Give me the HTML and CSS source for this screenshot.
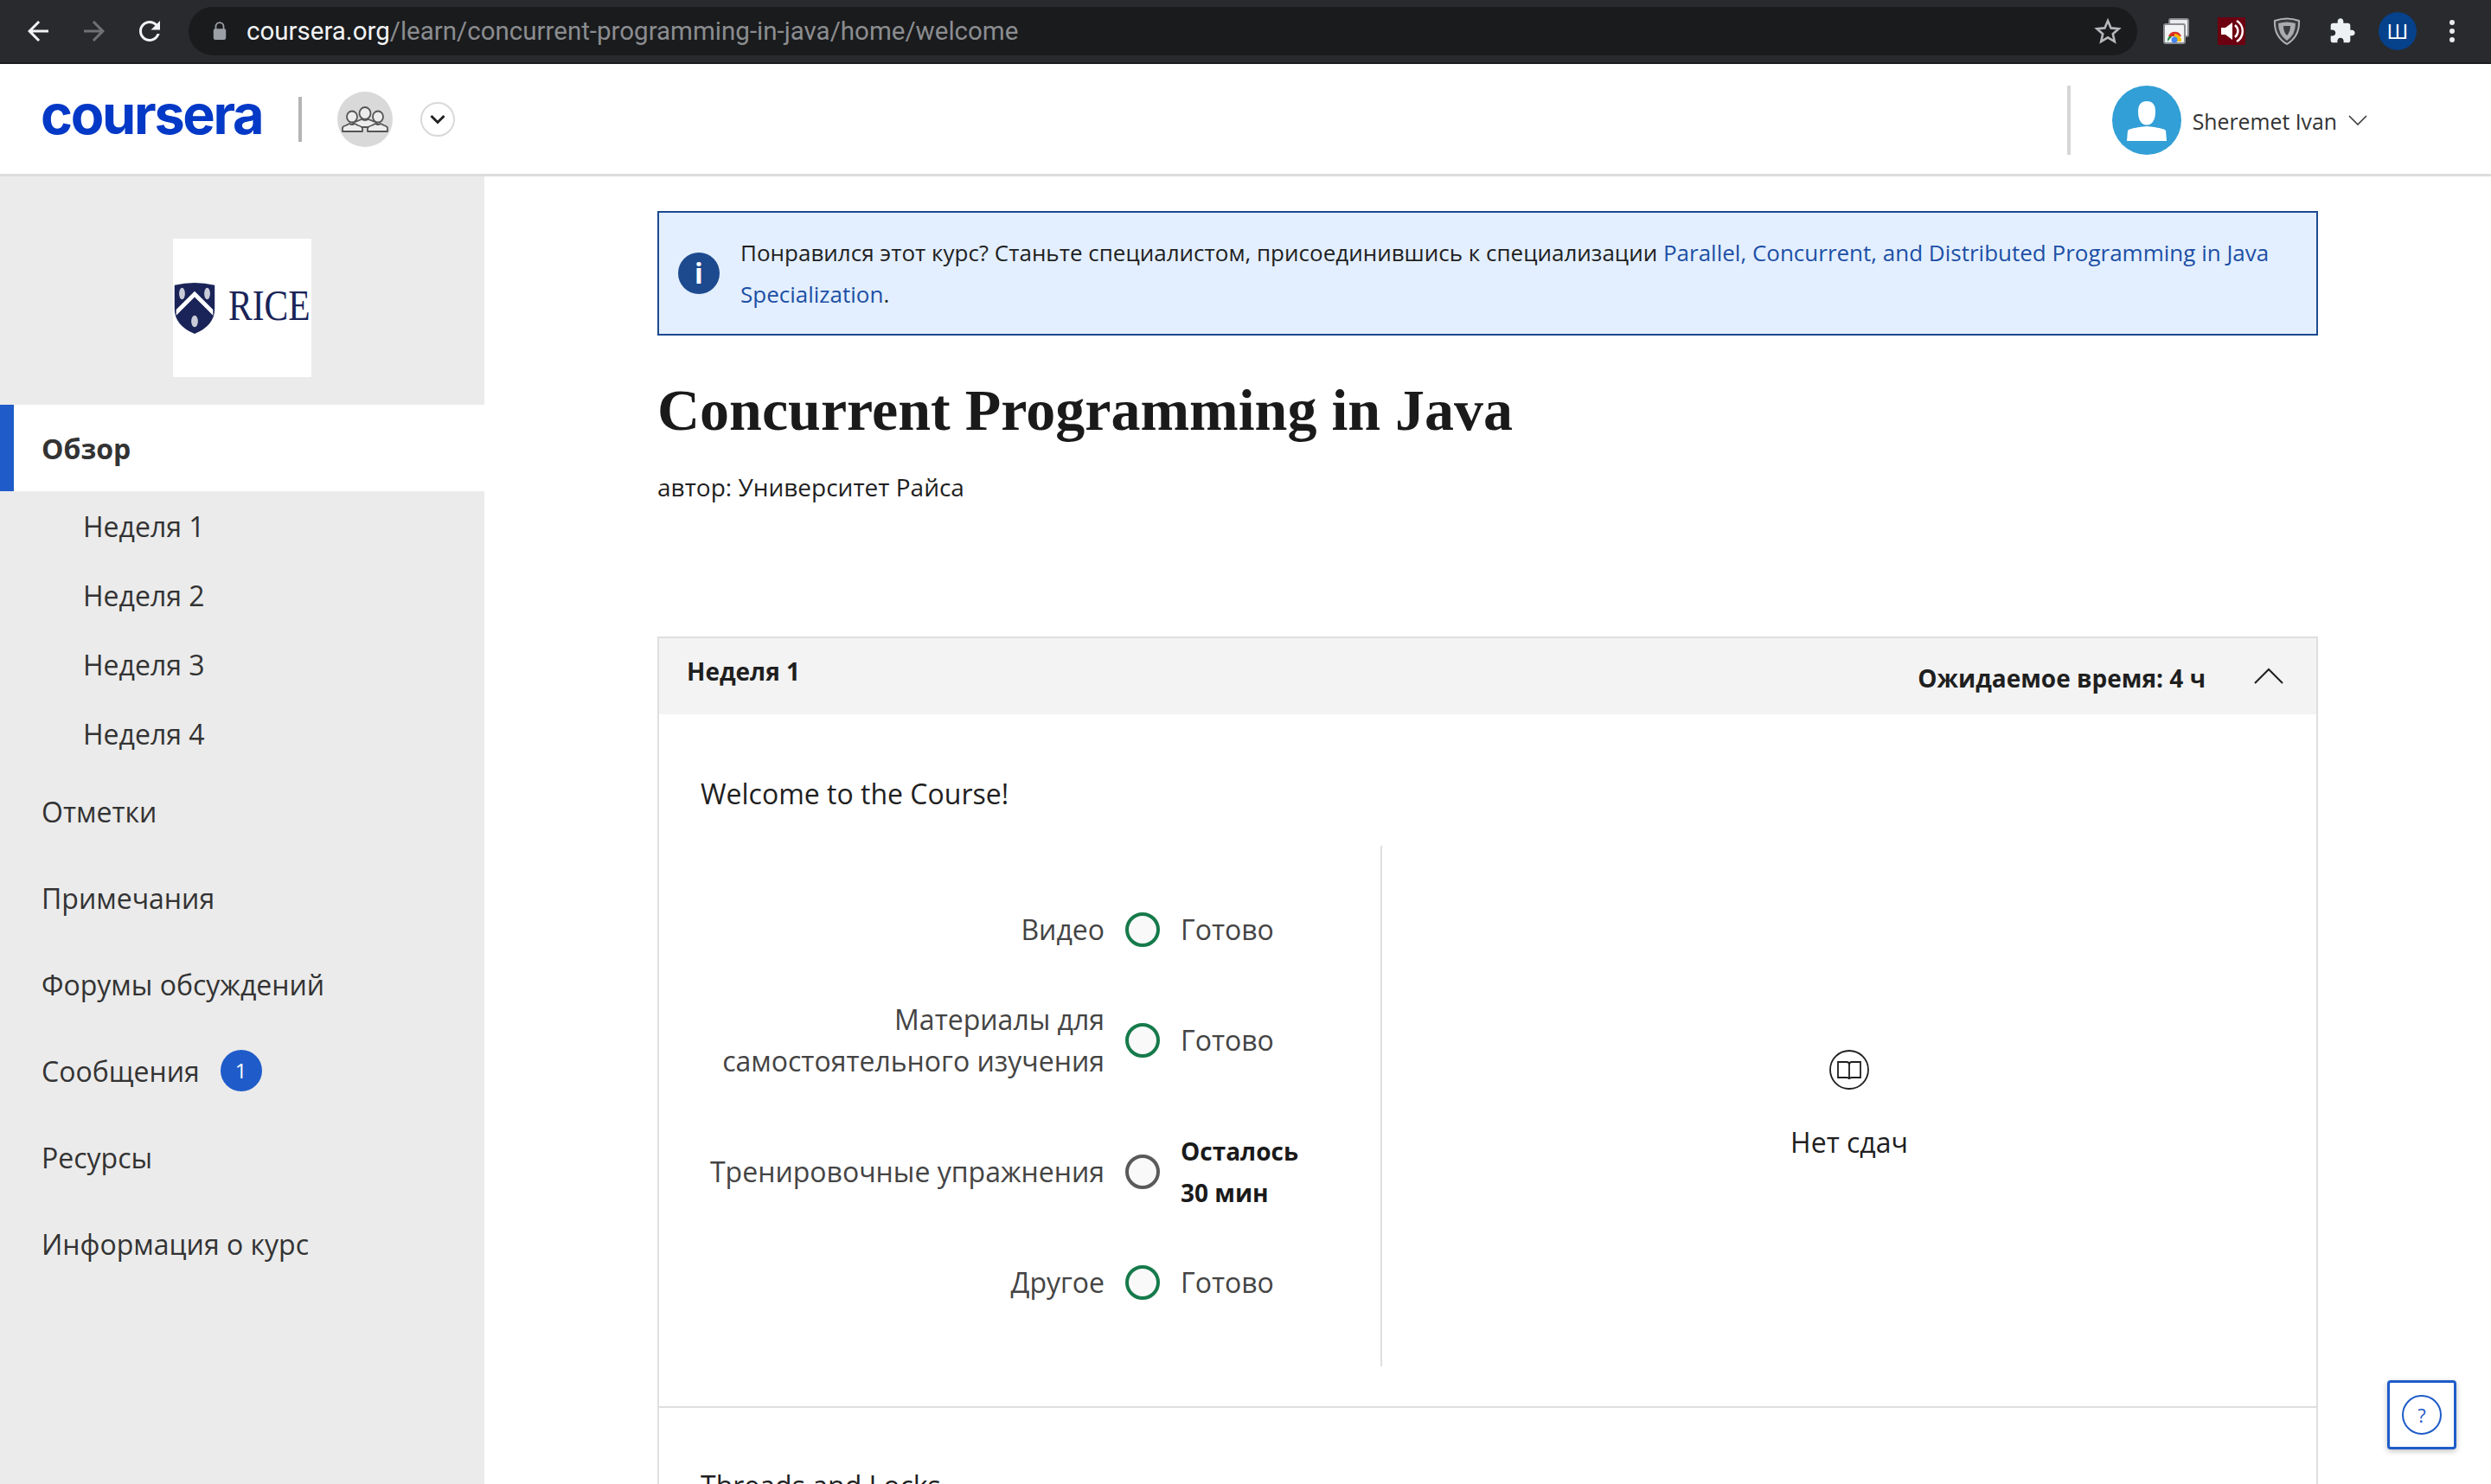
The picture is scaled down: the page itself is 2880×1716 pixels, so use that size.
FILE: index.html
```html
<!DOCTYPE html>
<html>

<head>
    <meta charset="utf-8">
    <title>Concurrent Programming in Java</title>
    <link rel="stylesheet" href="styles.css">
</head>

<body>
    <!-- Browser toolbar -->
    <div class="toolbar">
        <svg class="tool-icon back" viewBox="0 0 24 24"><path d="M20 11H7.830l5.590-5.590L12 4l-8 8 8 8 1.410-1.410L7.830 13H20v-2z" fill="#f1f3f4"/></svg>
        <svg class="tool-icon forward" viewBox="0 0 24 24"><path d="M4 11h12.170l-5.590-5.590L12 4l8 8-8 8-1.410-1.410L16.170 13H4v-2z" fill="#707174"/></svg>
        <svg class="tool-icon reload" viewBox="0 0 24 24"><path d="M17.650 6.350C16.200 4.900 14.210 4 12 4c-4.420 0-7.990 3.580-7.990 8s3.570 8 7.990 8c3.730 0 6.840-2.550 7.730-6h-2.080c-.82 2.330-3.040 4-5.650 4-3.310 0-6-2.690-6-6s2.690-6 6-6c1.660 0 3.140.69 4.220 1.780L13 11h7V4l-2.350 2.350z" fill="#f1f3f4"/></svg>
        <div class="urlbar">
            <svg class="lock" viewBox="0 0 20 26"><path d="M5 11V7a5 5 0 0 1 10 0v4" fill="none" stroke="#9aa0a6" stroke-width="2"/><rect x="2" y="10" width="16" height="14" rx="2" fill="#9aa0a6"/></svg>
            <span class="url"><span class="url-host">coursera.org</span>/learn/concurrent-programming-in-java/home/welcome</span>
            <svg class="star" viewBox="0 0 32 32"><path d="M16 4l3.600 8.400 9 .8-6.800 6 2 8.800L16 23.300 8.200 28l2-8.800-6.800-6 9-.8z" fill="none" stroke="#b5b7ba" stroke-width="2.600"/></svg>
        </div>
        <div class="extensions">
            <svg class="ext" viewBox="0 0 32 32">
                <rect x="8" y="2" width="22" height="20" rx="2" fill="#e8eaed" stroke="#8a8c8f" stroke-width="2"/>
                <rect x="2" y="8" width="24" height="22" rx="2" fill="#f1f3f4" stroke="#8a8c8f" stroke-width="2"/>
                <path d="M6 28a8 8 0 0 1 8-9z" fill="#1e8e3e"/>
                <path d="M7 22a8 8 0 0 1 15 0z" fill="#d93025"/>
                <path d="M14 19a8 8 0 0 1 8 9h-8z" fill="#fbbc04"/>
                <circle cx="14" cy="26" r="3.500" fill="#4285f4"/>
            </svg>
            <svg class="ext" viewBox="0 0 32 32">
                <rect width="32" height="32" fill="#6d0011"/>
                <path d="M4 12h5l8-6v20l-8-6H4z" fill="#fff"/>
                <path d="M20 9a9 9 0 0 1 0 14M22 4a14 14 0 0 1 0 24" fill="none" stroke="#fff" stroke-width="2.500"/>
            </svg>
            <svg class="ext" viewBox="0 0 32 32">
                <path d="M2 4q14-5 28 0q1 18-14 27Q1 22 2 4z" fill="#3a3b3e" stroke="#b0b2b5" stroke-width="2"/>
                <path d="M6 7q10-3 20 0q0 13-10 20Q6 20 6 7z" fill="#a9abae"/>
                <path d="M12 10h8q0 7-4 11q-4-4-4-11z" fill="#3a3b3e"/>
            </svg>
            <svg class="ext" viewBox="0 0 24 24"><path d="M20.500 11H19V7c0-1.100-.9-2-2-2h-4V3.500C13 2.120 11.880 1 10.500 1S8 2.120 8 3.500V5H4c-1.100 0-1.990.9-1.990 2v3.800H3.500c1.490 0 2.700 1.210 2.700 2.700s-1.210 2.700-2.700 2.700H2V20c0 1.100.9 2 2 2h3.800v-1.500c0-1.490 1.210-2.700 2.700-2.700 1.490 0 2.700 1.210 2.700 2.700V22H17c1.100 0 2-.9 2-2v-4h1.500c1.380 0 2.500-1.120 2.500-2.500S21.880 11 20.500 11z" fill="#eef1f3"/></svg>
            <div class="profile-dot">Ш</div>
            <svg class="ext-menu" viewBox="0 0 12 32"><circle cx="6" cy="6" r="3" fill="#e8eaed"/><circle cx="6" cy="16" r="3" fill="#e8eaed"/><circle cx="6" cy="26" r="3" fill="#e8eaed"/></svg>
        </div>
    </div>

    <!-- Coursera header -->
    <div class="header">
        <span class="logo">coursera</span>
        <div class="logo-divider"></div>
        <div class="group-icon">
            <svg viewBox="0 0 56 30" width="56" height="30">
                <g fill="#ececec" stroke="#555" stroke-width="1.800" stroke-linejoin="round">
                    <ellipse cx="28" cy="8" rx="6.500" ry="7"/>
                    <path d="M14 24v-4q0-2 5-3l5-2q4 2 8 0l5 2q5 1 5 3v4z"/>
                    <ellipse cx="13" cy="12" rx="6" ry="6.500"/>
                    <path d="M2 29v-4q0-2 4-3l4-2q3 2 6 0l4 2q4 1 5 3v4q0 0-1 0H3z"/>
                    <ellipse cx="43" cy="12" rx="6" ry="6.500"/>
                    <path d="M31 29v-4q1-2 5-3l4-2q3 2 6 0l4 2q4 1 4 3v4z"/>
                </g>
            </svg>
        </div>
        <div class="switcher">
            <svg viewBox="0 0 18 12" width="18" height="12"><path d="M1.500 2l7.500 7.500L16.500 2" fill="none" stroke="#222" stroke-width="3"/></svg>
        </div>
        <div class="header-right">
            <div class="header-divider"></div>
            <svg class="avatar" viewBox="0 0 80 80">
                <circle cx="40" cy="40" r="40" fill="#329fd6"/>
                <path d="M40 18q10 0 10 12q0 10-5 14q-5 3-10 0q-5-4-5-14q0-12 10-12z" fill="#fff"/>
                <path d="M17 64l1-12q2-3 22-5q20 2 22 5l1 12z" fill="#fff"/>
            </svg>
            <span class="user-name">Sheremet Ivan</span>
            <svg class="user-caret" viewBox="0 0 22 12"><path d="M1 1l10 10L21 1" fill="none" stroke="#333" stroke-width="1.500"/></svg>
        </div>
    </div>

    <div class="layout">
        <div class="sidebar">
            <div class="partner-wrap">
                <div class="partner">
                    <svg class="shield" viewBox="0 0 50 62">
                        <path d="M1 4q24-6 48 0v28q0 20-24 30Q1 52 1 32z" fill="#1a2458"/>
                        <path d="M3 40l22-22 22 22v-7L25 11 3 33z" fill="#fff"/>
                        <path d="M10 39l15-15 15 15v-3L25 21 10 36z" fill="#1a2458"/>
                        <ellipse cx="25" cy="47" rx="4" ry="7" fill="#c9cbd8"/>
                        <ellipse cx="10" cy="14" rx="3.500" ry="7" fill="#c9cbd8"/>
                        <ellipse cx="40" cy="14" rx="3.500" ry="7" fill="#c9cbd8"/>
                    </svg>
                    <span class="partner-name">RICE</span>
                </div>
            </div>
            <div class="nav-item active">Обзор</div>
            <div class="nav-week">Неделя 1</div>
            <div class="nav-week">Неделя 2</div>
            <div class="nav-week">Неделя 3</div>
            <div class="nav-week">Неделя 4</div>
            <div class="nav-item">Отметки</div>
            <div class="nav-item">Примечания</div>
            <div class="nav-item">Форумы обсуждений</div>
            <div class="nav-item">Сообщения <span class="badge">1</span></div>
            <div class="nav-item">Ресурсы</div>
            <div class="nav-item">Информация о курс</div>
        </div>

        <div class="main">
            <div class="banner">
                <div class="banner-icon">i</div>
                <p class="banner-text">Понравился этот курс? Станьте специалистом, присоединившись к специализации <a href="#">Parallel, Concurrent, and Distributed Programming in Java Specialization</a>.</p>
            </div>

            <h1 class="course-title">Concurrent Programming in Java</h1>
            <p class="course-author">автор: Университет Райса</p>

            <div class="week-card">
                <div class="week-head">
                    <span class="week-name">Неделя 1</span>
                    <span class="week-time">Ожидаемое время: 4 ч</span>
                    <svg class="week-caret" viewBox="0 0 34 20"><path d="M1 19L17 3l16 16" fill="none" stroke="#1f1f1f" stroke-width="2"/></svg>
                </div>
                <div class="module">
                    <h2 class="module-title">Welcome to the Course!</h2>
                    <div class="module-body">
                        <div class="progress">
                            <div class="progress-row">
                                <span class="progress-label">Видео</span>
                                <span class="ring done"></span>
                                <span class="progress-state">Готово</span>
                            </div>
                            <div class="progress-row">
                                <span class="progress-label">Материалы для самостоятельного изучения</span>
                                <span class="ring done"></span>
                                <span class="progress-state">Готово</span>
                            </div>
                            <div class="progress-row">
                                <span class="progress-label">Тренировочные упражнения</span>
                                <span class="ring"></span>
                                <span class="progress-state left">Осталось 30 мин</span>
                            </div>
                            <div class="progress-row">
                                <span class="progress-label">Другое</span>
                                <span class="ring done"></span>
                                <span class="progress-state">Готово</span>
                            </div>
                        </div>
                        <div class="no-due">
                            <svg class="book" viewBox="0 0 46 46">
                                <circle cx="23" cy="23" r="22" fill="none" stroke="#1f1f1f" stroke-width="1.800"/>
                                <path d="M10 14h10q3 0 3 3q0-3 3-3h10v18H26q-3 0-3 2q0-2-3-2H10zM23 17v17" fill="none" stroke="#1f1f1f" stroke-width="1.800"/>
                            </svg>
                            <span class="no-due-text">Нет сдач</span>
                        </div>
                    </div>
                </div>
                <div class="module next">
                    <h2 class="module-title">Threads and Locks</h2>
                </div>
            </div>
        </div>
    </div>

    <div class="help">
        <span class="help-ring">?</span>
    </div>
</body>

</html>
```
FILE: styles.css
```css
* {
    box-sizing: border-box
}

html,
body {
    margin: 0;
    height: 1716px;
    overflow: hidden;
}

body {
    position: relative;
    font-family: "Open Sans", sans-serif;
    color: #1f1f1f;
    background-color: #fff;
}

/* Browser toolbar */
.toolbar {
    display: flex;
    align-items: center;
    height: 74px;
    background-color: #292a2d;
    border-bottom: 2px solid #1b1c1e;
}

.tool-icon {
    width: 36px;
    height: 36px;
    flex: none;
}

.back {
    margin-left: 26px;
}

.forward {
    margin-left: 29px;
}

.reload {
    margin-left: 28px;
}

.urlbar {
    display: flex;
    align-items: center;
    width: 2253px;
    height: 56px;
    margin-left: 27px;
    border-radius: 28px;
    background-color: #1a1b1d;
}

.lock {
    width: 18px;
    height: 24px;
    margin-left: 27px;
}

.url {
    flex: 1;
    margin-left: 22px;
    font-family: Roboto, sans-serif;
    font-size: 29.500px;
    color: #8b8d90;
    white-space: nowrap;
}

.url-host {
    color: #f1f3f4;
}

.star {
    width: 32px;
    height: 32px;
    margin-right: 18px;
}

.extensions {
    display: flex;
    align-items: center;
    gap: 32px;
    margin-left: 29px;
}

.ext {
    width: 32px;
    height: 32px;
}

.profile-dot {
    width: 44px;
    height: 44px;
    margin-left: -6px;
    border-radius: 50%;
    background-color: #06418b;
    color: #fff;
    font-size: 24px;
    line-height: 44px;
    text-align: center;
}

.ext-menu {
    width: 12px;
    height: 32px;
    margin-left: 3px;
}

/* Coursera header */
.header {
    display: flex;
    align-items: center;
    height: 130px;
    padding-left: 47px;
    border-bottom: 3px solid #dcdcdc;
}

.logo {
    width: 254px;
    font-family: Inter, sans-serif;
    font-size: 63px;
    font-weight: 700;
    letter-spacing: -2.300px;
    color: #0339c6;
    line-height: 1;
    margin-bottom: 10px;
    white-space: nowrap;
}

.logo-divider {
    width: 4px;
    height: 52px;
    margin-left: 44px;
    background-color: #b5b5b5;
}

.group-icon {
    display: flex;
    align-items: center;
    justify-content: center;
    width: 64px;
    height: 64px;
    margin-left: 41px;
    border-radius: 50%;
    background-color: #d9d9d9;
}

.switcher {
    display: flex;
    align-items: center;
    justify-content: center;
    width: 40px;
    height: 40px;
    margin-left: 32px;
    border: 2px solid #d9d9d9;
    border-radius: 50%;
}

.header-right {
    display: flex;
    align-items: center;
    margin-left: auto;
    margin-top: 3px;
    padding-right: 143px;
}

.header-divider {
    width: 4px;
    height: 80px;
    margin-right: 48px;
    background-color: #d6d6d6;
}

.avatar {
    width: 80px;
    height: 80px;
}

.user-name {
    margin-left: 13px;
    margin-top: 2px;
    font-size: 24.800px;
    color: #333;
}

.user-caret {
    width: 22px;
    height: 12px;
    margin-left: 13px;
}

/* Page body */
.layout {
    display: flex;
    height: 1512px;
}

.sidebar {
    flex: none;
    width: 560px;
    background-color: #ebebeb;
    font-size: 32px;
    color: #333;
}

.partner-wrap {
    display: flex;
    justify-content: center;
    padding: 72px 0 32px;
}

.partner {
    display: flex;
    align-items: center;
    width: 160px;
    height: 160px;
    background-color: #fff;
}

.shield {
    flex: none;
    width: 50px;
    height: 60px;
}

.partner-name {
    margin-left: 14px;
    margin-bottom: 6px;
    font-family: "Liberation Serif", serif;
    font-size: 50px;
    color: #1a2458;
    transform: scaleX(0.83);
    transform-origin: left center;
}

.nav-item {
    display: flex;
    align-items: center;
    height: 100px;
    padding-left: 48px;
}

.nav-item.active {
    padding-left: 32px;
    border-left: 16px solid #1f5cc9;
    background-color: #fff;
    font-weight: 700;
}

.nav-week {
    display: flex;
    align-items: center;
    height: 80px;
    padding-left: 96px;
}

.badge {
    width: 48px;
    height: 48px;
    margin-left: 24px;
    border-radius: 50%;
    background-color: #1f5cc9;
    color: #fff;
    font-size: 24px;
    line-height: 48px;
    text-align: center;
}

.main {
    flex: none;
    width: 1920px;
    margin-left: 200px;
    padding-top: 40px;
}

/* Info banner */
.banner {
    display: flex;
    align-items: center;
    height: 144px;
    padding-left: 22px;
    padding-right: 40px;
    border: 2px solid #1d4a8f;
    background-color: #e3efff;
}

.banner-icon {
    flex: none;
    width: 48px;
    height: 48px;
    border-radius: 50%;
    background-color: #1d4a8f;
    color: #fff;
    font-size: 32px;
    font-weight: 700;
    line-height: 48px;
    text-align: center;
}

.banner-text {
    margin: 0 0 0 24px;
    font-size: 26px;
    line-height: 48px;
}

.banner-text a {
    color: #1d4fa5;
    text-decoration: none;
}

.course-title {
    margin: 46px 0 0;
    font-family: "Liberation Serif", serif;
    font-size: 68px;
    font-weight: 700;
    line-height: 80px;
    color: #1a1a1a;
}

.course-author {
    margin: 29px 0 0;
    font-size: 28px;
    line-height: 40px;
}

/* Week card */
.week-card {
    margin-top: 153px;
    border: 2px solid #dfdfdf;
    border-bottom: 0;
}

.week-head {
    display: flex;
    align-items: center;
    height: 88px;
    padding: 0 38px 0 32px;
    background-color: #f3f3f3;
}

.week-name {
    flex: 1;
    margin-bottom: 12px;
    font-size: 28px;
    font-weight: 700;
}

.week-time {
    margin-top: 4px;
    font-size: 28px;
    font-weight: 700;
}

.week-caret {
    width: 34px;
    height: 20px;
    margin-left: 56px;
    margin-bottom: 2px;
}

.module {
    padding: 68px 48px 0;
    border-bottom: 2px solid #dfdfdf;
}

.module.next {
    padding-top: 66px;
}

.module-title {
    margin: 0;
    font-size: 32px;
    font-weight: 400;
    line-height: 48px;
}

.module-body {
    display: flex;
    height: 602px;
    margin: 36px -46px 46px -46px;
}

.progress {
    display: flex;
    flex-direction: column;
    justify-content: center;
    gap: 56px;
    width: 834px;
    padding-left: 46px;
    border-right: 2px solid #dfdfdf;
}

.progress-row {
    display: grid;
    grid-template-columns: 467px 40px 172px;
    column-gap: 24px;
    align-items: center;
    font-size: 32px;
    line-height: 48px;
    color: #444;
}

.progress-label {
    text-align: right;
}

.ring {
    width: 40px;
    height: 40px;
    border: 4px solid #5a5a5a;
    border-radius: 50%;
    background-color: #f9f9f9;
}

.ring.done {
    border-color: #167a4b;
}

.progress-state.left {
    font-size: 28px;
    font-weight: 700;
    color: #1a1a1a;
}

.no-due {
    display: flex;
    flex: 1;
    flex-direction: column;
    align-items: center;
    justify-content: center;
    gap: 37px;
    padding-left: 2px;
}

.book {
    width: 46px;
    height: 46px;
}

.no-due-text {
    font-size: 32px;
    line-height: 48px;
}

/* Help button */
.help {
    position: absolute;
    left: 2760px;
    top: 1596px;
    display: flex;
    align-items: center;
    justify-content: center;
    width: 80px;
    height: 80px;
    border: 3px solid #1f5cc9;
    border-radius: 4px;
    background-color: #fff;
    box-shadow: 0 2px 6px rgba(0, 0, 0, 0.25);
}

.help-ring {
    width: 46px;
    height: 46px;
    border: 2px solid #1f5cc9;
    border-radius: 50%;
    color: #1f5cc9;
    font-size: 22px;
    line-height: 42px;
    text-align: center;
}
```
